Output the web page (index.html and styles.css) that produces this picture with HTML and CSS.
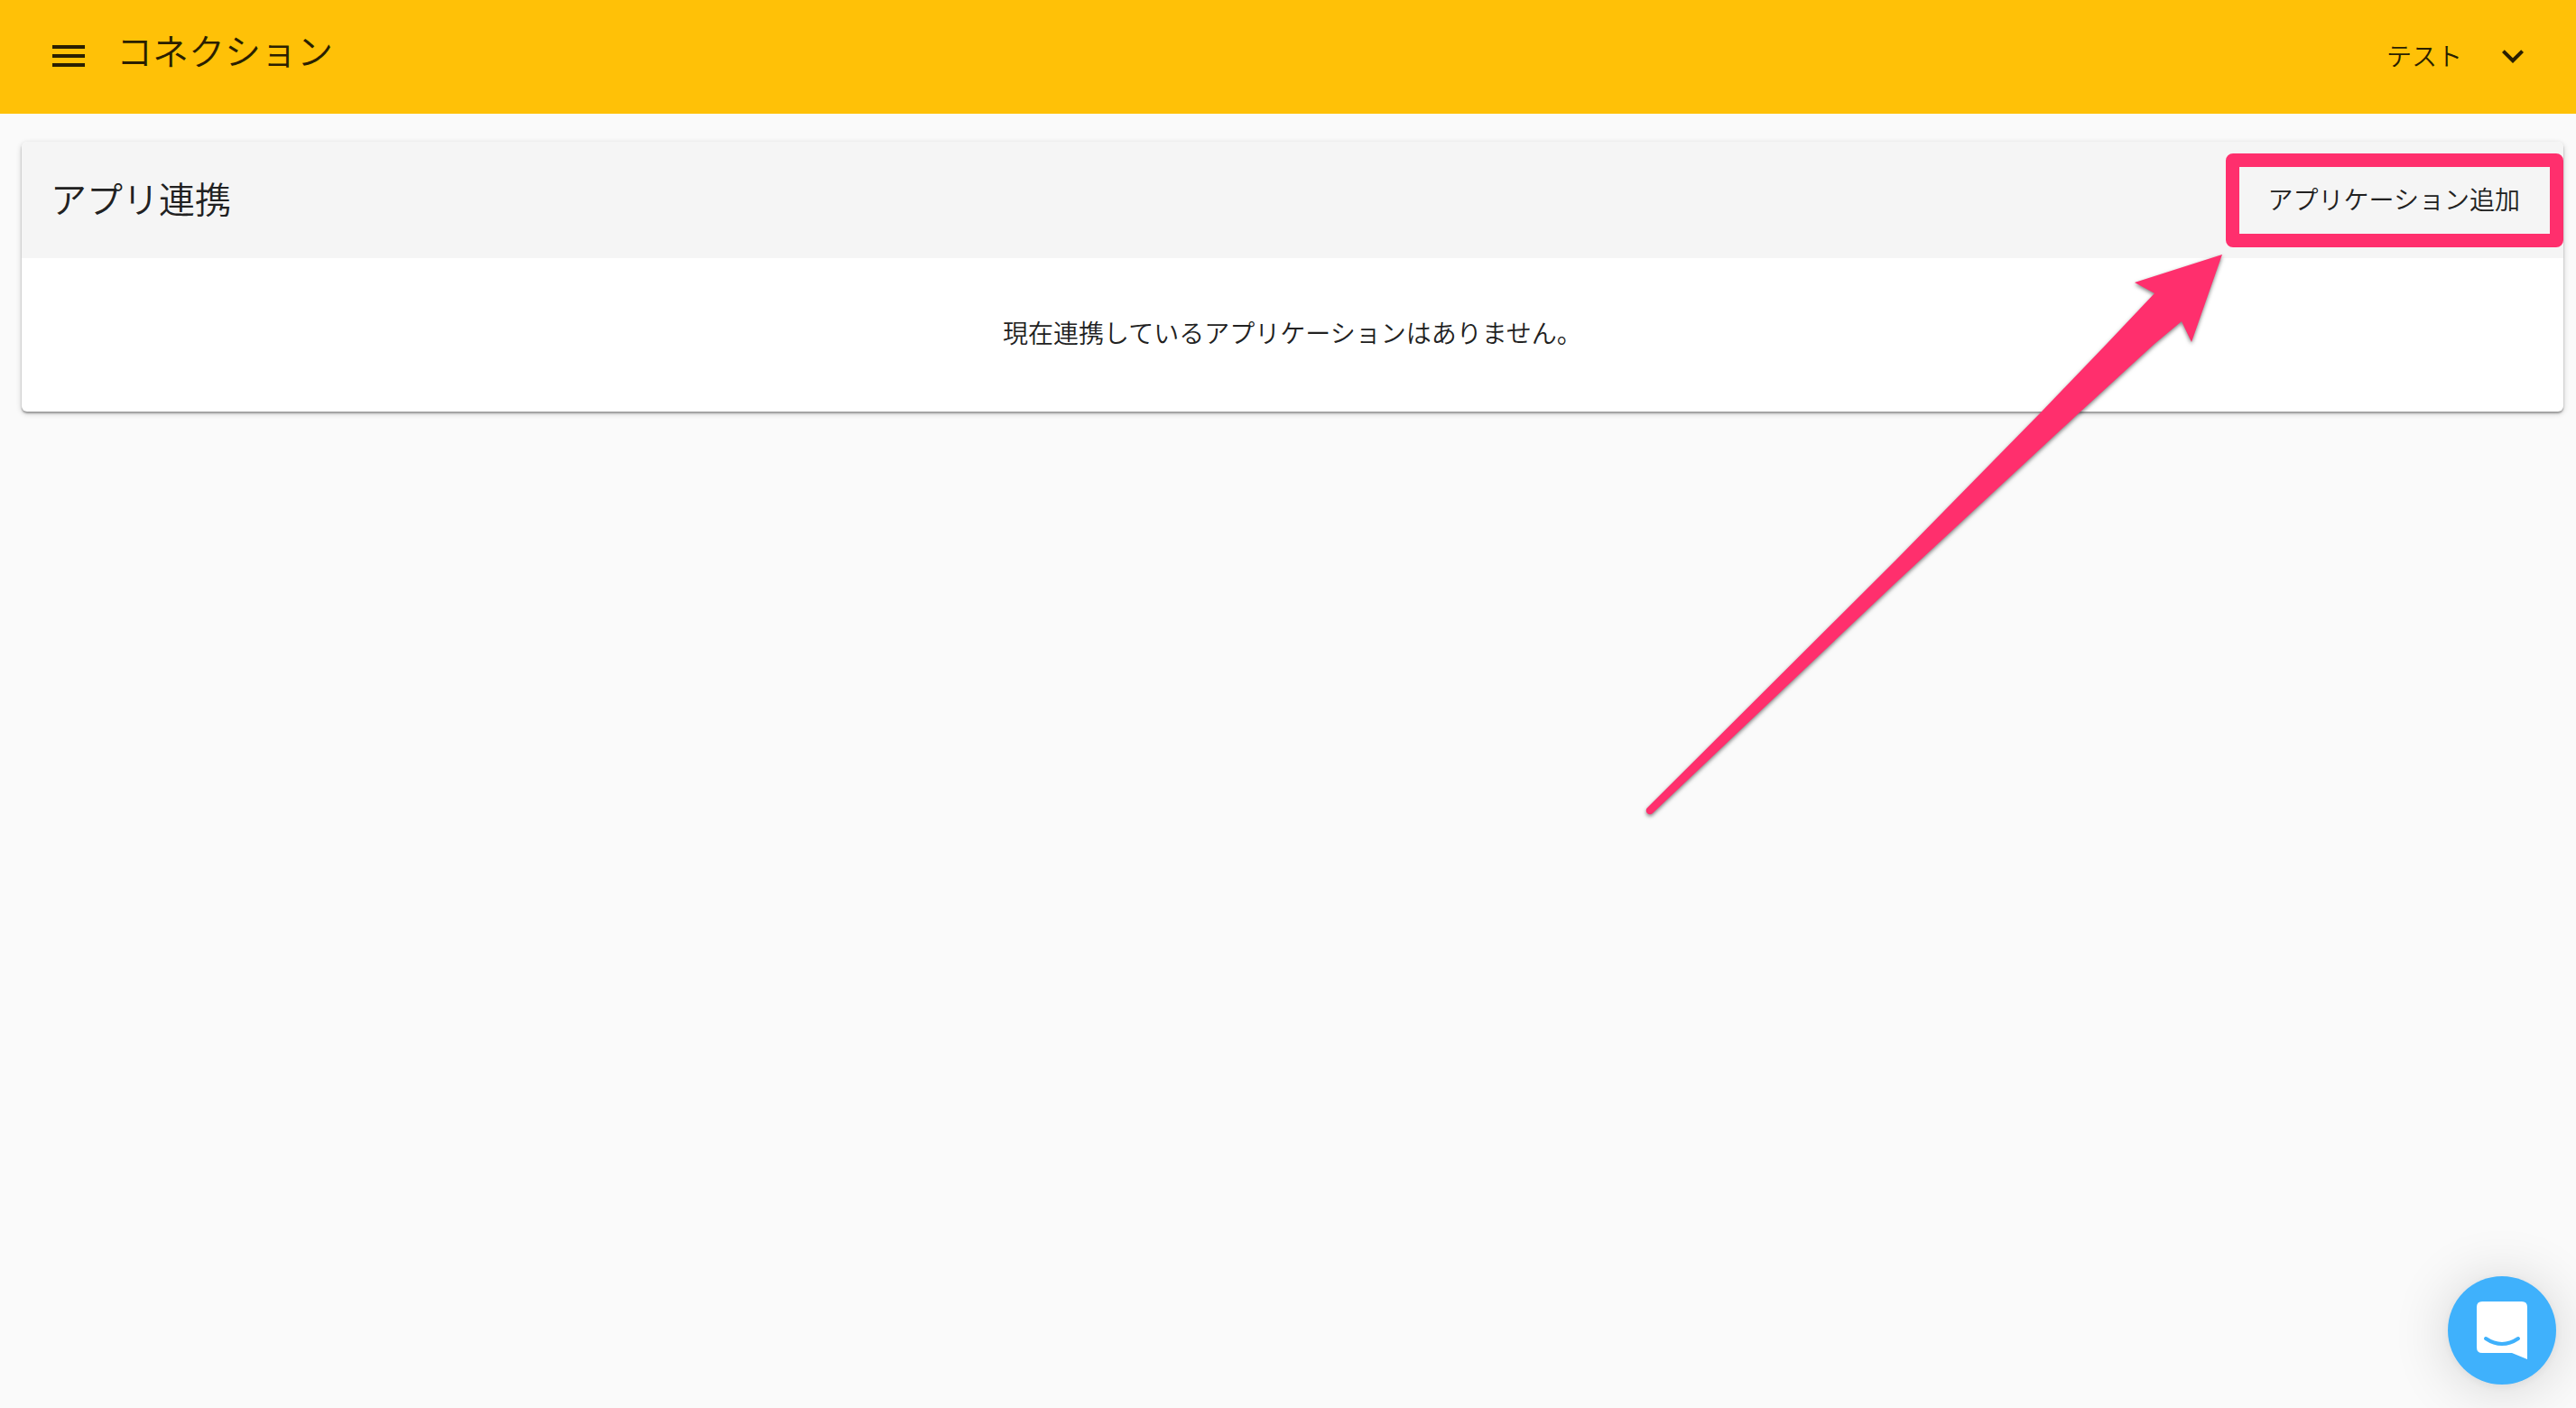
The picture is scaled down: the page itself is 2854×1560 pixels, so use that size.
FILE: index.html
```html
<!DOCTYPE html>
<html lang="ja">
<head>
<meta charset="utf-8">
<meta name="viewport" content="width=device-width, initial-scale=1">
<title>コネクション</title>
<link rel="stylesheet" href="styles.css">
</head>
<body>
<header class="app-bar">
  <button class="icon-button" type="button" aria-label="メニュー">
    <svg width="48" height="48" viewBox="0 0 24 24" aria-hidden="true"><path d="M3 18h18v-2H3v2zm0-5h18v-2H3v2zm0-7v2h18V6H3z"/></svg>
  </button>
  <h1 class="app-title">コネクション</h1>
  <button class="account" type="button">
    <span class="account-name">テスト</span>
    <svg width="48" height="48" viewBox="0 0 24 24" aria-hidden="true"><path d="M7.41 8.59 12 13.17l4.59-4.58L18 10l-6 6-6-6z"/></svg>
  </button>
</header>
<main class="content">
  <section class="card">
    <div class="card-header">
      <h2 class="card-title">アプリ連携</h2>
      <div class="action">
        <button class="add-button" type="button">アプリケーション追加</button>
        <svg class="arrow" width="660" height="640" viewBox="0 0 660 640" aria-hidden="true">
          <path d="M642 1 545 32 567 44 514 100 441 176 280 340 5 614A4 4 0 0 0 11 620L280 365 484 176 567 100 597 75 608 98Z"/>
        </svg>
      </div>
    </div>
    <p class="empty">現在連携しているアプリケーションはありません。</p>
  </section>
</main>
<button class="chat" type="button" aria-label="チャットを開く">
  <svg width="56" height="64" viewBox="0 0 56 64" aria-hidden="true">
    <path fill="#fff" d="M6 0H50Q56 0 56 6V64L39 57H6Q0 57 0 51V6Q0 0 6 0Z"/>
    <path fill="none" stroke="#3fb1fc" stroke-width="4" stroke-linecap="round" d="M10 41Q28 53 46 41"/>
  </svg>
</button>
</body>
</html>
```

FILE: styles.css
```css
* {
  box-sizing: border-box;
}

body {
  margin: 0;
  min-height: 100vh;
  background: #fafafa;
  color: #212121;
  font-family: "Noto Sans CJK JP", sans-serif;
  font-size: 28px;
  font-weight: 350;
  line-height: 40px;
}

button {
  border: 0;
  padding: 0;
  background: none;
  color: inherit;
  font: inherit;
  cursor: pointer;
}

svg {
  display: block;
}

.app-bar {
  display: flex;
  align-items: center;
  height: 126px;
  padding: 0 46px 2px 52px;
  background: #ffc107;
  color: #2a1f01;
}

.app-bar svg {
  fill: currentColor;
}

.app-title {
  margin: 0 auto 0 29px;
  padding-bottom: 14px;
  font-size: 40px;
  font-weight: 350;
  line-height: 56px;
}

.account {
  display: flex;
  align-items: center;
  gap: 32px;
}

.account-name {
  padding-bottom: 2px;
}

.content {
  padding: 31px 14px 32px 24px;
}

.card {
  border-radius: 6px;
  background: #fff;
  box-shadow: 0 2px 2px rgba(0, 0, 0, 0.3), 0 2px 6px rgba(0, 0, 0, 0.2);
}

.card-header {
  display: flex;
  align-items: center;
  justify-content: space-between;
  height: 129px;
  padding-left: 32px;
  border-radius: 6px 6px 0 0;
  background: #f5f5f5;
}

.card-title {
  margin: 0;
  padding-bottom: 6px;
  font-size: 40px;
  font-weight: 350;
  line-height: 56px;
}

.action {
  position: relative;
}

.add-button {
  display: block;
  height: 104px;
  padding: 0 33px 4px 32px;
  border: 15px solid #ff2f6d;
  border-radius: 8px;
}

.arrow {
  position: absolute;
  top: 111px;
  right: 360px;
  fill: #ff2f6d;
  filter: drop-shadow(0 2px 2px rgba(0, 0, 0, 0.5));
}

.empty {
  margin: 0;
  padding: 62px 16px 68px;
  text-align: center;
}

.chat {
  position: fixed;
  right: 22px;
  bottom: 26px;
  display: flex;
  align-items: center;
  justify-content: center;
  width: 120px;
  height: 120px;
  border-radius: 50%;
  background: #3fb1fc;
  box-shadow: 0 2px 12px rgba(0, 0, 0, 0.06), 0 4px 64px rgba(0, 0, 0, 0.16);
}
```
